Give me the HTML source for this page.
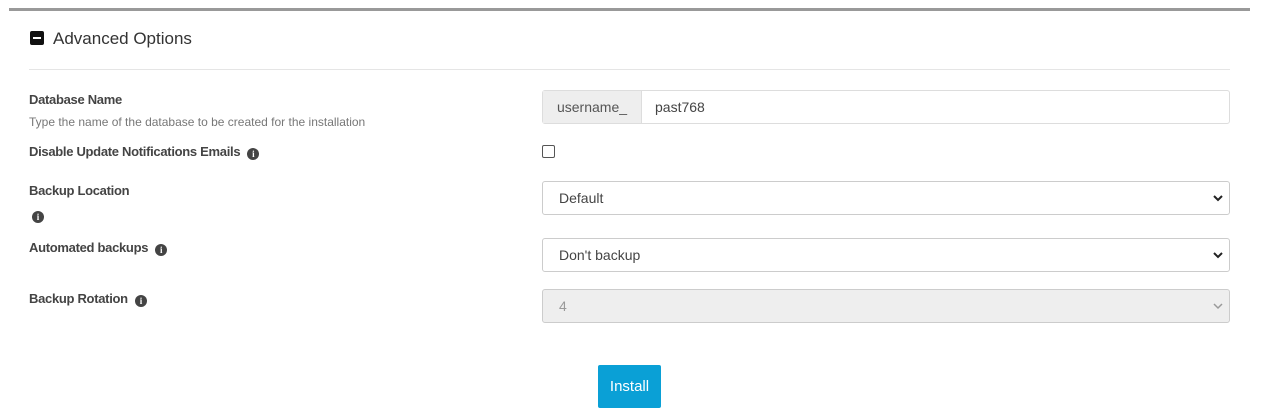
<!DOCTYPE html>
<html><head><style>
body{margin:0;width:1264px;height:415px;background:#fff;font-family:"Liberation Sans",sans-serif;color:#333;position:relative;overflow:hidden}
.a{position:absolute}
.lbl{font-size:13px;font-weight:bold;color:#444;letter-spacing:-0.3px}
.info{display:inline-block;width:12px;height:12px;border-radius:50%;background:#444;color:#fff;font-size:9px;font-weight:bold;text-align:center;line-height:12px;font-family:"Liberation Serif",serif;vertical-align:-1px;margin-left:7px}
.sel{position:absolute;left:542px;width:686px;height:32px;border:1px solid #ccc;border-radius:3px;background:#fff;font-size:14px;line-height:33px;box-sizing:content-box;color:#444}
.sel span{margin-left:16px}
.sel svg{position:absolute;right:6px;top:12px}
</style></head><body>
<div class="a" style="left:9px;top:8px;width:1241px;height:3px;background:#999"></div>
<div class="a" style="left:30px;top:31px;width:14px;height:14px;background:#111;border-radius:2px"><div style="position:absolute;left:3px;top:6px;width:8px;height:2px;background:#fff"></div></div>
<div class="a" style="left:53px;top:29px;font-size:17px;color:#333">Advanced Options</div>
<div class="a" style="left:29px;top:69px;width:1201px;height:1px;background:#e5e5e5"></div>

<div class="a lbl" style="left:29px;top:92px">Database Name</div>
<div class="a" style="left:29px;top:115px;font-size:12px;color:#777">Type the name of the database to be created for the installation</div>
<div class="a lbl" style="left:29px;top:144px">Disable Update Notifications Emails<span class="info">i</span></div>
<div class="a lbl" style="left:29px;top:183px">Backup Location</div>
<div class="a" style="left:32px;top:206px"><span class="info" style="margin:0">i</span></div>
<div class="a lbl" style="left:29px;top:240px">Automated backups<span class="info">i</span></div>
<div class="a lbl" style="left:29px;top:291px">Backup Rotation<span class="info">i</span></div>

<div class="a" style="left:542px;top:90px;width:686px;height:32px;border:1px solid #ddd;border-radius:3px;font-size:14px;line-height:33px;color:#444">
<div style="position:absolute;left:0;top:0;width:98px;height:32px;background:#eee;border-right:1px solid #ddd;color:#555;text-align:center">username_</div>
<div style="position:absolute;left:112px;top:0">past768</div></div>
<div class="a" style="left:542px;top:145px;width:11px;height:11px;border:1px solid #555;border-radius:2px"></div>

<div class="sel" style="top:181px"><span>Default</span><svg width="10" height="8"><path d="M1 2l4 4 4-4" stroke="#222" stroke-width="2" fill="none"/></svg></div>
<div class="sel" style="top:238px"><span>Don't backup</span><svg width="10" height="8"><path d="M1 2l4 4 4-4" stroke="#222" stroke-width="2" fill="none"/></svg></div>
<div class="sel" style="top:289px;background:#eee;color:#999;border-color:#ccc"><span>4</span><svg width="10" height="8"><path d="M1 2l4 4 4-4" stroke="#999" stroke-width="1.5" fill="none"/></svg></div>

<div class="a" style="left:598px;top:365px;width:63px;height:43px;background:#0aa0d6;border-radius:2px;color:#fff;font-size:15px;line-height:44px;text-align:center">Install</div>
</body></html>
